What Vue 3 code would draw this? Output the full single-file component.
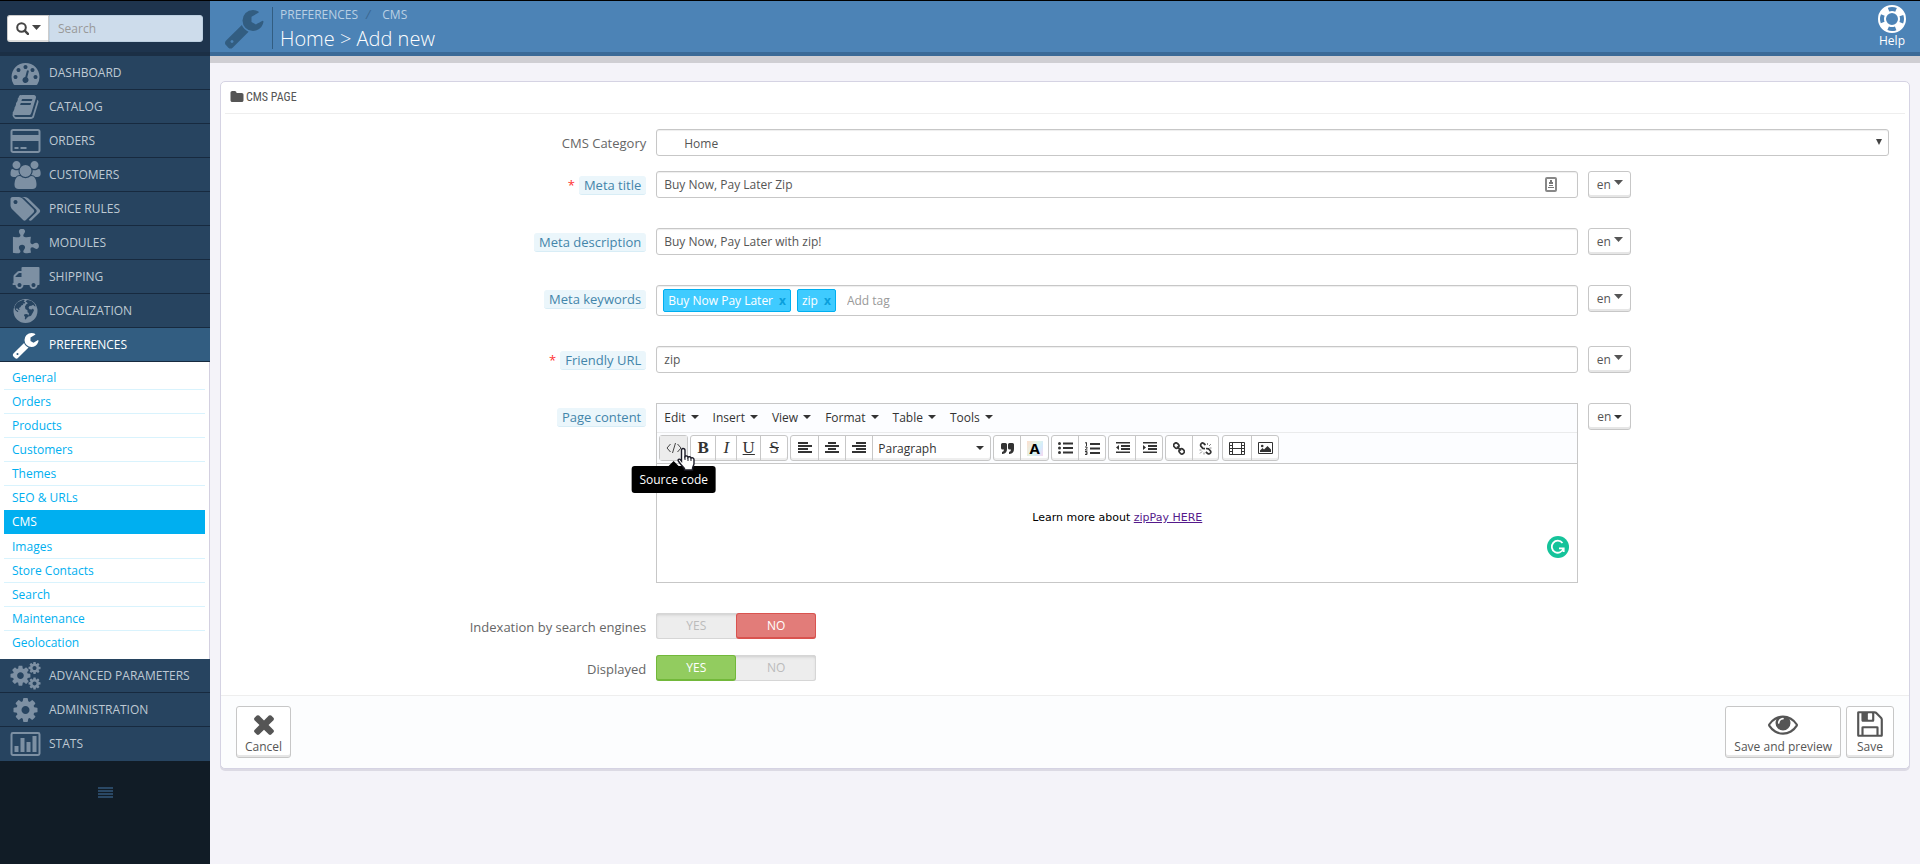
<script setup>
import { ref } from 'vue'

const cog = 'M1152 896q0-106-75-181t-181-75-181 75-75 181 75 181 181 75 181-75 75-181zm512-109v222q0 12-8 23t-20 13l-185 28q-19 54-39 91 35 50 107 138 10 12 10 25t-9 23q-27 37-99 108t-94 71q-12 0-26-9l-138-108q-44 23-91 38-16 136-29 186-7 28-36 28h-222q-14 0-24.5-8.5t-11.5-21.5l-28-184q-49-16-90-37l-141 107q-10 9-25 9-14 0-25-11-126-114-165-168-7-10-7-23 0-12 8-23 15-21 51-66.5t54-70.5q-27-50-41-99l-183-27q-13-2-21-12.5t-8-23.5v-222q0-12 8-23t19-13l186-28q14-46 39-92-40-57-107-138-10-12-10-24 0-10 9-23 26-36 98.5-107.5t94.5-71.5q13 0 26 10l138 107q44-23 91-38 16-136 29-186 7-28 36-28h222q14 0 24.5 8.5t11.5 21.5l28 184q49 16 90 37l142-107q9-9 24-9 13 0 25 10 129 119 165 170 7 8 7 22 0 12-8 23-15 21-51 66.5t-54 70.5q26 50 41 98l183 28q13 2 21 12.5t8 23.5z'
const wrench = 'M448 1472q0-26-19-45t-45-19-45 19-19 45 19 45 45 19 45-19 19-45zm644-420l-682 682q-37 37-90 37-52 0-91-37l-106-108q-38-36-38-90 0-53 38-91l681-681q39 98 114.5 173.5t173.5 114.5zm634-435q0 39-23 106-47 134-164.5 217.5t-258.5 83.5q-185 0-316.5-131.5t-131.5-316.5 131.5-316.5 316.5-131.5q58 0 121.5 16.5t107.5 46.5q16 11 16 28t-16 28l-293 169v224l193 107q5-3 79-48.5t135.5-81 70.5-35.5q15 0 23.5 10t8.5 25z'
const times = 'M1490 1322q0 40-28 68l-136 136q-28 28-68 28t-68-28l-294-294-294 294q-28 28-68 28t-68-28l-136-136q-28-28-28-68t28-68l294-294-294-294q-28-28-28-68t28-68l136-136q28-28 68-28t68 28l294 294 294-294q28-28 68-28t68 28l136 136q28 28 28 68t-28 68l-294 294 294 294q28 28 28 68z'
const eye = 'M1664 960q-152-236-381-353 61 104 61 225 0 185-131.5 316.5t-316.5 131.5-316.5-131.5-131.5-316.5q0-121 61-225-229 117-381 353 133 205 333.5 326.5t434.5 121.5 434.5-121.5 333.5-326.5zm-720-384q0-20-14-34t-34-14q-125 0-214.5 89.5t-89.5 214.5q0 20 14 34t34 14 34-14 14-34q0-86 61-147t147-61q20 0 34-14t14-34zm848 384q0 34-20 69-140 230-376.5 368.5t-499.5 138.5-499.5-139-376.5-368q-20-35-20-69t20-69q140-229 376.5-368t499.5-139 499.5 139 376.5 368q20 35 20 69z'
const floppy = 'M512 1536h768v-384h-768v384zm896 0h128v-896q0-14-10-38.5t-20-34.5l-281-281q-10-10-34-20t-39-10v416q0 40-28 68t-68 28h-576q-40 0-68-28t-28-68v-416h-128v1280h128v-416q0-40 28-68t68-28h832q40 0 68 28t28 68v416zm-384-928v-320q0-13-9.5-22.5t-22.5-9.5h-192q-13 0-22.5 9.5t-9.5 22.5v320q0 13 9.5 22.5t22.5 9.5h192q13 0 22.5-9.5t9.5-22.5zm640 32v928q0 40-28 68t-68 28h-1344q-40 0-68-28t-28-68v-1344q0-40 28-68t68-28h928q40 0 88 20t76 48l280 280q28 28 48 76t20 88z'
const folder = 'M1728 608v704q0 92-66 158t-158 66h-1216q-92 0-158-66t-66-158v-960q0-92 66-158t158-66h320q92 0 158 66t66 158v32h672q92 0 158 66t66 158z'

const topItems = [
  { label: 'Dashboard', w: 1792, d: 'M384 1152q0-53-37.5-90.5t-90.5-37.5-90.5 37.5-37.5 90.5 37.5 90.5 90.5 37.5 90.5-37.5 37.5-90.5zm192-448q0-53-37.5-90.5t-90.5-37.5-90.5 37.5-37.5 90.5 37.5 90.5 90.5 37.5 90.5-37.5 37.5-90.5zm428 481l101-382q6-26-7.5-48.5t-38.5-29.5-48 6.5-30 39.5l-101 382q-60 5-107 43.5t-63 98.5q-20 77 20 146t117 89 146-20 89-117q16-60-6-117t-72-91zm660-33q0-53-37.5-90.5t-90.5-37.5-90.5 37.5-37.5 90.5 37.5 90.5 90.5 37.5 90.5-37.5 37.5-90.5zm-640-640q0-53-37.5-90.5t-90.5-37.5-90.5 37.5-37.5 90.5 37.5 90.5 90.5 37.5 90.5-37.5 37.5-90.5zm448 192q0-53-37.5-90.5t-90.5-37.5-90.5 37.5-37.5 90.5 37.5 90.5 90.5 37.5 90.5-37.5 37.5-90.5zm320 448q0 261-141 483-19 29-54 29h-1402q-35 0-54-29-141-221-141-483 0-182 71-348t191-286 286-191 348-71 348 71 286 191 191 286 71 348z' },
  { label: 'Catalog', w: 1792, d: 'M1703 478q40 57 18 129l-275 906q-19 64-76.5 107.5t-122.5 43.5h-923q-77 0-148.5-53.5t-99.5-131.5q-24-67-2-127 0-4 3-27t4-37q1-8-3-21.5t-3-19.5q2-11 8-21t16.5-23.5 16.5-23.5q23-38 45-91.5t30-91.5q3-10 .5-30t-.5-28q3-11 17-28t17-23q21-36 42-92t25-90q1-9-2.5-32t.5-28q4-13 22-30.5t22-22.5q19-26 42.5-84.5t27.5-96.5q1-8-3-25.5t-2-26.5q2-8 9-18t18-23 17-21q8-12 16.5-30.5t15-35 16-36 19.5-32 26.5-23.5 36-11.5 47.5 5.5l-1 3q38-9 51-9h761q74 0 114 56t18 130l-274 906q-36 119-71.5 153.5t-128.5 34.5h-869q-27 0-38 15-11 16-1 43 24 70 144 70h923q29 0 56-15.5t35-41.5l300-987q7-22 5-57 38 15 59 43zm-1064 2q-4 13 2 22.5t20 9.5h608q13 0 25.5-9.5t16.5-22.5l21-64q4-13-2-22.5t-20-9.5h-608q-13 0-25.5 9.5t-16.5 22.5zm-83 256q-4 13 2 22.5t20 9.5h608q13 0 25.5-9.5t16.5-22.5l21-64q4-13-2-22.5t-20-9.5h-608q-13 0-25.5 9.5t-16.5 22.5z' },
  { label: 'Orders', w: 1920, d: 'M1760 128q66 0 113 47t47 113v1216q0 66-47 113t-113 47h-1600q-66 0-113-47t-47-113v-1216q0-66 47-113t113-47h1600zm-1600 128q-13 0-22.5 9.5t-9.5 22.5v224h1664v-224q0-13-9.5-22.5t-22.5-9.5h-1600zm1600 1280q13 0 22.5-9.5t9.5-22.5v-608h-1664v608q0 13 9.5 22.5t22.5 9.5h1600zm-1504-128v-128h256v128h-256zm384 0v-128h384v128h-384z' },
  { label: 'Customers', w: 1920, d: 'M593 896q-162 5-265 128h-134q-82 0-138-40.5t-56-118.5q0-353 124-353 6 0 43.5 21t97.5 42.5 119 21.5q67 0 133-23-5 37-5 66 0 159 93 256zm1071 637q0 120-73 189.5t-194 69.5h-874q-121 0-194-69.5t-73-189.5q0-53 3.5-103.5t14-109 26.5-108.5 43-97.5 62-81 85.5-53.5 111.5-20q10 0 43 21.5t73 48 107 48 135 21.5 135-21.5 107-48 73-48 43-21.5q61 0 111.5 20t85.5 53.5 62 81 43 97.5 26.5 108.5 14 109 3.5 103.5zm-1024-1277q0 106-75 181t-181 75-181-75-75-181 75-181 181-75 181 75 75 181zm704 384q0 159-112.5 271.5t-271.5 112.5-271.5-112.5-112.5-271.5 112.5-271.5 271.5-112.5 271.5 112.5 112.5 271.5zm576 225q0 78-56 118.5t-138 40.5h-134q-103-123-265-128 93-97 93-256 0-29-5-66 66 23 133 23 59 0 119-21.5t97.5-42.5 43.5-21q124 0 124 353zm-128-609q0 106-75 181t-181 75-181-75-75-181 75-181 181-75 181 75 75 181z' },
  { label: 'Price Rules', w: 1920, d: 'M448 448q0-53-37.5-90.5t-90.5-37.5-90.5 37.5-37.5 90.5 37.5 90.5 90.5 37.5 90.5-37.5 37.5-90.5zm1067 576q0 53-37 90l-491 492q-39 37-91 37-53 0-90-37l-715-716q-38-37-64.5-101t-26.5-117v-416q0-52 38-90t90-38h416q53 0 117 26.5t102 64.5l715 714q37 39 37 91zm384 0q0 53-37 90l-491 492q-39 37-91 37-36 0-59-14t-53-45l470-470q37-37 37-90 0-52-37-91l-715-714q-38-38-102-64.5t-117-26.5h224q53 0 117 26.5t102 64.5l715 714q37 39 37 91z' },
  { label: 'Modules', w: 1792, d: 'M1755 1083q0 81-44.5 135t-123.5 54q-41 0-77.5-17.5t-59-38-56.5-38-71-17.5q-110 0-110 124 0 39 16 115t15 115v5q-22 0-33 1-34 3-97.5 11.5t-115.5 13.5-98 5q-61 0-103-26.5t-42-83.5q0-37 17.5-71t38-56.5 38-59 17.5-77.5q0-79-54-123.5t-135-44.5q-84 0-143 45.5t-59 127.5q0 43 15 83t33.5 64.5 33.5 53 15 50.5q0 45-46 89-37 35-117 35-95 0-245-24-9-2-27.5-4t-27.5-4l-13-2q-1 0-3-1-2 0-2-1v-1024q2 1 17.5 3.5t34 5 21.5 3.5q150 24 245 24 80 0 117-35 46-44 46-89 0-22-15-50.5t-33.5-53-33.5-64.5-15-83q0-82 59-127.5t144-45.5q80 0 134 44.5t54 123.5q0 41-17.5 77.5t-38 59-38 56.5-17.5 71q0 57 42 83.5t103 26.5q64 0 180-15t163-17v2q-1 2-3.5 17.5t-5 34-3.5 21.5q-24 150-24 245 0 80 35 117 44 46 89 46 22 0 50.5-15t53-33.5 64.5-33.5 83-15q82 0 127.5 59t45.5 143z' },
  { label: 'Shipping', w: 1792, d: 'M640 1408q0-52-38-90t-90-38-90 38-38 90 38 90 90 38 90-38 38-90zm-384-512h384v-256h-158q-13 0-22 9l-195 195q-9 9-9 22v30zm1280 512q0-52-38-90t-90-38-90 38-38 90 38 90 90 38 90-38 38-90zm256-1088v1024q0 15-4 26.5t-13.5 18.5-16.5 11.5-23.5 6-22.5 2-25.5 0-22.5-.5q0 106-75 181t-181 75-181-75-75-181h-384q0 106-75 181t-181 75-181-75-75-181h-64q-3 0-22.5.5t-25.5 0-22.5-2-23.5-6-16.5-11.5-13.5-18.5-4-26.5q0-26 19-45t45-19v-320q0-8-.5-35t0-38 2.5-34.5 6.5-37 14-30.5 22.5-30l198-198q19-19 50.5-32t58.5-13h160v-192q0-26 19-45t45-19h1024q26 0 45 19t19 45z' },
  { label: 'Localization', w: 1792, globe: true },
  { label: 'Preferences', w: 1792, d: wrench, active: true }
]
const subItems = ['General', 'Orders', 'Products', 'Customers', 'Themes', 'SEO & URLs', 'CMS', 'Images', 'Store Contacts', 'Search', 'Maintenance', 'Geolocation']
const bottomItems = [
  { label: 'Advanced Parameters', w: 1920, cogs: true },
  { label: 'Administration', w: 1792, d: cog },
  { label: 'Stats', w: 1920, chart: true }
]
const editorMenus = ['Edit', 'Insert', 'View', 'Format', 'Table', 'Tools']

const category = ref('Home')
const metaTitle = ref('Buy Now, Pay Later Zip')
const metaDescription = ref('Buy Now, Pay Later with zip!')
const tags = ref(['Buy Now Pay Later', 'zip'])
const friendlyUrl = ref('zip')
const indexed = ref('no')
const displayed = ref('yes')
</script>

<template>
  <div class="app">
    <aside class="sidebar">
      <form class="search" role="search" @submit.prevent>
        <button type="button" class="search-type" aria-label="Search scope">
          <svg width="13" height="13" viewBox="0 0 13 13"><circle cx="5.5" cy="5.5" r="4.3" fill="none" stroke="#444" stroke-width="2" /><path d="M8.7 8.7l3.2 3.2" stroke="#444" stroke-width="2.4" stroke-linecap="round" /></svg>
          <svg width="9" height="6" viewBox="0 0 9 6"><path d="M0 0h9L4.500 5z" fill="#444" /></svg>
        </button>
        <input type="search" placeholder="Search" aria-label="Search" />
      </form>
      <nav>
        <a v-for="item in topItems" :key="item.label" href="#" class="nav-item" :class="{ active: item.active }">
          <svg class="nav-icon" :viewBox="`0 0 ${item.w} 1792`" fill="currentColor">
            <template v-if="item.globe">
              <circle cx="896" cy="896" r="768" />
              <path fill="#274460" d="M610 215l190-50 60 70-90 60 120 20-20 100-100-30 30 90-130 40-70 130-110 30 60 110-50 60-100-100-110-30 10 120 110 30 60 140 160 30 150 120-30 130-120 90-50 160-60 40-90-190-10-170-120-130-50-190" opacity="0" />
              <path fill="#274460" d="M560 260l200-90 90 60-80 70 110 40-60 90-100-20 30 80-120 50-60 120-100 40 50 100-40 40-110-110-90 0 20 90 90 40 50 80-60 20-130-110-60-160 60-180 120-160zM1040 190l240 70 180 160 90 180-100-20-60-80-110 60-130 10-60 110 60 100 150 20 70-60 70 100-60 140-120 210-100 60-60-90 10-130-80-60-10-130-130-70-30-160 90-140 90-60-50-70-90-40 60-80zM830 1110l150-20 130 70-20 110-110 60-60 110-70-40 20-120-70-90z" />
            </template>
            <path v-else :d="item.d" />
          </svg>
          <span>{{ item.label }}</span>
        </a>
        <div class="subnav">
          <a v-for="sub in subItems" :key="sub" href="#" :class="{ current: sub === 'CMS' }">{{ sub }}</a>
        </div>
        <a v-for="item in bottomItems" :key="item.label" href="#" class="nav-item">
          <svg class="nav-icon" :viewBox="`0 0 ${item.w} 1792`" fill="currentColor">
            <template v-if="item.cogs">
              <path :d="cog" transform="translate(-106 131) scale(.83)" />
              <path :d="cog" transform="translate(1090 -65) scale(.5)" />
              <path :d="cog" transform="translate(1090 925) scale(.5)" />
            </template>
            <template v-else-if="item.chart">
              <rect x="64" y="192" width="1792" height="1408" rx="90" fill="none" stroke="currentColor" stroke-width="128" />
              <path d="M256 1024h256v384H256zM640 512h256v896H640zM1024 768h256v640h-256zM1408 384h256v1024h-256z" />
            </template>
            <path v-else :d="item.d" />
          </svg>
          <span>{{ item.label }}</span>
        </a>
      </nav>
      <button type="button" class="collapse" aria-label="Collapse menu">
        <svg width="15" height="11" viewBox="0 0 15 11"><path d="M0 0h15v2H0zM0 3h15v2H0zM0 6h15v2H0zM0 9h15v2H0z" fill="#2a4865" /></svg>
      </button>
    </aside>

    <div class="main">
      <header class="page-head">
        <svg class="page-icon" viewBox="0 0 1792 1792"><path :d="wrench" fill="#325d81" /></svg>
        <div class="titles">
          <nav class="crumbs" aria-label="Breadcrumb"><a href="#">PREFERENCES</a><i>/</i><a href="#">CMS</a></nav>
          <h1>Home &gt; Add new</h1>
        </div>
        <a href="#" class="help">
          <svg width="30" height="30" viewBox="0 0 30 30" fill="none">
            <circle cx="15" cy="15" r="10" stroke="#fff" stroke-width="8" />
            <circle cx="15" cy="15" r="10" stroke="#4c83b6" stroke-width="4" stroke-dasharray="7.708 8" stroke-dashoffset="3.854" />
          </svg>
          <span>Help</span>
        </a>
      </header>

      <form class="panel" @submit.prevent>
        <h2 class="panel-title"><svg width="14" height="14" viewBox="0 0 1792 1792"><path :d="folder" fill="#555" /></svg>CMS PAGE</h2>

        <div class="rows">
          <div class="row">
            <div class="label-cell"><label for="category">CMS Category</label></div>
            <div class="select-wrap">
              <select id="category" v-model="category" class="field"><option>Home</option></select>
              <svg width="6" height="6" viewBox="0 0 6 6"><path d="M0 0h6L3 6z" fill="#444" /></svg>
            </div>
          </div>

          <div class="row tall">
            <div class="label-cell"><b>*</b><label for="title" class="hint">Meta title</label></div>
            <div class="lang-row">
              <div class="input-wrap">
                <input id="title" v-model="metaTitle" type="text" class="field" />
                <svg class="autofill" width="12" height="15" viewBox="0 0 12 15"><rect x="1" y="1" width="10" height="13" rx="1" fill="#fff" stroke="#888" stroke-width="2" /><path d="M5 3h2v2h1v2H4V5h1zM4 8h4v1H4zM3 10h6v1H3z" fill="#777" /></svg>
              </div>
              <button type="button" class="btn lang">en<svg width="9" height="9" viewBox="0 0 9 9"><path d="M0 0h9L4.500 5z" fill="#555" /></svg></button>
            </div>
          </div>

          <div class="row tall">
            <div class="label-cell"><label for="description" class="hint">Meta description</label></div>
            <div class="lang-row">
              <input id="description" v-model="metaDescription" type="text" class="field" />
              <button type="button" class="btn lang">en<svg width="9" height="9" viewBox="0 0 9 9"><path d="M0 0h9L4.500 5z" fill="#555" /></svg></button>
            </div>
          </div>

          <div class="row tall">
            <div class="label-cell"><label for="keywords" class="hint">Meta keywords</label></div>
            <div class="lang-row">
              <div class="field tag-field">
                <span v-for="tag in tags" :key="tag" class="tag">{{ tag }}<button type="button" :aria-label="`Remove ${tag}`">x</button></span>
                <input id="keywords" type="text" placeholder="Add tag" />
              </div>
              <button type="button" class="btn lang">en<svg width="9" height="9" viewBox="0 0 9 9"><path d="M0 0h9L4.500 5z" fill="#555" /></svg></button>
            </div>
          </div>

          <div class="row tall">
            <div class="label-cell"><b>*</b><label for="url" class="hint">Friendly URL</label></div>
            <div class="lang-row">
              <input id="url" v-model="friendlyUrl" type="text" class="field" />
              <button type="button" class="btn lang">en<svg width="9" height="9" viewBox="0 0 9 9"><path d="M0 0h9L4.500 5z" fill="#555" /></svg></button>
            </div>
          </div>

          <div class="row tall">
            <div class="label-cell"><span id="content-label" class="hint">Page content</span></div>
            <div class="lang-row">
              <div class="editor">
                <div class="menubar">
                  <button v-for="menu in editorMenus" :key="menu" type="button">{{ menu }}<svg width="8" height="4" viewBox="0 0 8 4"><path d="M0 0h8L4 4z" fill="#333" /></svg></button>
                </div>
                <div class="toolbar">
                  <div class="group code-group">
                    <button type="button" class="w27 pressed" aria-label="Source code"><svg width="16" height="12" viewBox="0 0 16 12" fill="none" stroke="#444"><path d="M4.500 2L1 6l3.500 4M11.500 2L15 6l-3.500 4M9.500 1l-3 10" /></svg></button>
                    <div class="tooltip" role="tooltip">Source code</div>
                    <svg class="pointer" width="19" height="24" viewBox="0 0 19 24"><path d="M6 1.500c1.500 0 2 1 2 2v6c.5-.9 3-.8 3 .7.7-.9 2.900-.5 3 .9 1-.8 3-.2 3 1.500v4c0 2-1.500 3-1.500 5v1.400H7.500v-1.400C5 19 3 16.500 1.300 14c-.9-1.700 1-2.500 2.200-1.300L4.500 14V3.500c0-1 .3-2 1.500-2z" fill="#fff" stroke="#1c1c28" stroke-width="1.400" /><path d="M8 9v4M11 10.500V14M14 11.500V14" stroke="#1c1c28" /></svg>
                  </div>
                  <div class="group serif">
                    <button type="button" class="w24" aria-label="Bold"><strong>B</strong></button>
                    <button type="button" class="w21" aria-label="Italic"><em>I</em></button>
                    <button type="button" class="w24" aria-label="Underline"><u>U</u></button>
                    <button type="button" class="w27" aria-label="Strikethrough"><s>S</s></button>
                  </div>
                  <div class="group">
                    <button type="button" class="w27" aria-label="Align left"><svg width="14" height="12" viewBox="0 0 14 12"><path d="M0 0h10v2H0zM0 3h14v2H0zM0 6h10v2H0zM0 9h14v2H0z" /></svg></button>
                    <button type="button" class="w27" aria-label="Align center"><svg width="14" height="12" viewBox="0 0 14 12"><path d="M3 0h8v2H3zM0 3h14v2H0zM3 6h8v2H3zM0 9h14v2H0z" /></svg></button>
                    <button type="button" class="w27" aria-label="Align right"><svg width="14" height="12" viewBox="0 0 14 12"><path d="M4 0h10v2H4zM0 3h14v2H0zM4 6h10v2H4zM0 9h14v2H0z" /></svg></button>
                    <button type="button" class="format">Paragraph<svg width="8" height="4" viewBox="0 0 8 4"><path d="M0 0h8L4 4z" /></svg></button>
                  </div>
                  <div class="group">
                    <button type="button" class="w26" aria-label="Blockquote"><svg width="13" height="11" viewBox="0 0 13 11"><path d="M0 1.500Q0 0 1.500 0h3Q6 0 6 1.500V6q0 4.500-4.500 5H1V9q2-.5 2-2.500H1.500Q0 6.500 0 5zM7 1.500Q7 0 8.500 0h3Q13 0 13 1.500V6q0 4.500-4.500 5H8V9q2-.5 2-2.500H8.500Q7 6.500 7 5z" /></svg></button>
                    <button type="button" class="w28 colour" aria-label="Text color"><span>A</span></button>
                  </div>
                  <div class="group">
                    <button type="button" class="w26" aria-label="Bullet list"><svg width="15" height="12" viewBox="0 0 15 12"><circle cx="1.500" cy="1.500" r="1.500" /><circle cx="1.500" cy="6" r="1.500" /><circle cx="1.500" cy="10.500" r="1.500" /><path d="M5 .5h10v2H5zM5 5h10v2H5zM5 9.500h10v2H5z" /></svg></button>
                    <button type="button" class="w27" aria-label="Numbered list"><svg width="15" height="13" viewBox="0 0 15 13"><path d="M5 1h10v2H5zM5 5.500h10v2H5zM5 10h10v2H5z" /><path d="M0 1l1.500-.5V4M0 5h2v1.200L.2 8H2.500M0 9.500h2v3H0M.5 11h1.500" fill="none" stroke="#333" /></svg></button>
                  </div>
                  <div class="group">
                    <button type="button" class="w26" aria-label="Decrease indent"><svg width="15" height="12" viewBox="0 0 15 12"><path d="M1 0h14v1.500H1zM6 3h9v2H6zM6 6h9v2H6zM1 9.500h14v1.500H1zM4 3v5L1 5.500z" /></svg></button>
                    <button type="button" class="w27" aria-label="Increase indent"><svg width="15" height="12" viewBox="0 0 15 12"><path d="M1 0h14v1.500H1zM6 3h9v2H6zM6 6h9v2H6zM1 9.500h14v1.500H1zM1 3v5l3-2.500z" /></svg></button>
                  </div>
                  <div class="group">
                    <button type="button" class="w26" aria-label="Insert link"><svg width="12" height="13" viewBox="0 0 12 13" fill="none" stroke="#333" stroke-width="1.700"><rect x="-2.300" y="-2.700" width="4.600" height="5.400" rx="2.200" transform="translate(3.300 3.600) rotate(-42)" /><rect x="-2.300" y="-2.700" width="4.600" height="5.400" rx="2.200" transform="translate(8.700 9.300) rotate(-42)" /><path d="M4 4.500l4 4" /></svg></button>
                    <button type="button" class="w26" aria-label="Remove link"><svg width="13" height="13" viewBox="0 0 13 13" fill="none" stroke="#333" stroke-width="1.700"><path d="M6.500 3L4.500 1.300C3 .3 1 2 1.800 4l2 2.400 2.200.2M7 6.500l2.500.3 2 2.200c1 1.700-.8 3.500-2.500 2.700L6.800 10" /><path d="M8.500 1v2M12 2L10 4M12.500 6H10.500M1 11.500L3 9.500M5 12.500V10.500M.5 8H2.500" stroke="#888" stroke-width="1" /></svg></button>
                  </div>
                  <div class="group last">
                    <button type="button" class="w28" aria-label="Insert video"><svg width="16" height="13" viewBox="0 0 16 13" fill="none" stroke="#333"><path d="M.5.5h15v12H.5zM3.500.5v12M12.500.5v12M3.500 6.500h9M1 3.500h2.500M1 6.500h2.500M1 9.500h2.500M12.500 3.500H15M12.500 6.500H15M12.500 9.500H15" /></svg></button>
                    <button type="button" class="w27" aria-label="Insert image"><svg width="15" height="12" viewBox="0 0 15 12"><path d="M.5.5h14v11H.5z" fill="none" stroke="#333" /><circle cx="4.200" cy="4" r="1.300" /><path d="M2 10V8.500L4.500 6l1.500 1.500L9.500 4 13 7.500V10z" /></svg></button>
                  </div>
                </div>
                <div class="canvas" contenteditable="true" role="textbox" aria-multiline="true" aria-labelledby="content-label"><p>Learn more about <a href="#">zipPay HERE</a></p></div>
                <svg class="checker" width="22" height="22" viewBox="0 0 22 22" fill="none"><circle cx="11" cy="11" r="11" fill="#15c39a" /><path d="M15.500 7A6 6 0 1 0 16.500 12.500M12 12.300h4.700V16" stroke="#fff" stroke-width="1.800" /></svg>
              </div>
              <button type="button" class="btn lang">en<svg width="8" height="4" viewBox="0 0 8 4"><path d="M0 0h8L4 4z" fill="#333" /></svg></button>
            </div>
          </div>

          <div class="row switch-row">
            <div class="label-cell"><span id="index-label">Indexation by search engines</span></div>
            <div class="switch" role="radiogroup" aria-labelledby="index-label">
              <label class="yes"><input v-model="indexed" type="radio" name="indexed" value="yes" />YES</label>
              <label class="no"><input v-model="indexed" type="radio" name="indexed" value="no" />NO</label>
            </div>
          </div>
          <div class="row switch-row">
            <div class="label-cell"><span id="display-label">Displayed</span></div>
            <div class="switch" role="radiogroup" aria-labelledby="display-label">
              <label class="yes"><input v-model="displayed" type="radio" name="displayed" value="yes" />YES</label>
              <label class="no"><input v-model="displayed" type="radio" name="displayed" value="no" />NO</label>
            </div>
          </div>
        </div>

        <footer class="panel-foot">
          <button type="button" class="btn action"><svg width="30" height="30" viewBox="0 0 1792 1792"><path :d="times" /></svg>Cancel</button>
          <button type="button" class="btn action push"><svg width="30" height="30" viewBox="0 0 1792 1792"><path :d="eye" /></svg>Save and preview</button>
          <button type="submit" class="btn action"><svg width="30" height="30" viewBox="0 0 1792 1792"><path :d="floppy" /></svg>Save</button>
        </footer>
      </form>
    </div>
  </div>
</template>

<style>
body { background: #f4f3f9; }
</style>

<style scoped>
.app, .app * { box-sizing: border-box; }
.app {
  display: grid;
  grid-template-columns: 210px minmax(0, 1fr);
  min-height: 100vh;
  border-top: 1px solid #000;
  font: 12px/17px "Open Sans", "Noto Sans", sans-serif;
  color: #555;
}
button, input, select { font: inherit; color: inherit; margin: 0; }
button { cursor: pointer; }
a { text-decoration: none; }
svg { flex: none; display: block; }

.sidebar { background: #111c26; }
.search {
  display: flex;
  height: 55px;
  padding: 14px 7px 10px;
  background: #1e344d;
  border-bottom: 4px solid #1b2f45;
}
.search-type {
  display: flex;
  align-items: center;
  gap: 3px;
  width: 42px;
  padding: 0 0 0 8px;
  border: 1px solid #ccc;
  border-bottom: 2px solid #ddd;
  border-radius: 3px 0 0 3px;
  background: #fff;
}
.search input {
  flex: 1;
  min-width: 0;
  border: 1px solid #bccfe0;
  border-radius: 0 3px 3px 0;
  background: #cddceb;
  padding: 0 8px;
  appearance: none;
  outline: none;
}
.search input::placeholder { color: #999; opacity: 1; }
.nav-item {
  display: flex;
  align-items: center;
  gap: 8px;
  height: 34px;
  padding-left: 10px;
  background: #274460;
  border-bottom: 1px solid #172a3f;
  color: #bec9d3;
  text-transform: uppercase;
}
.nav-item:last-child { border-bottom-color: #274460; }
.nav-icon { width: 31px; height: 28px; color: #7d90a3; }
.nav-item.active { background: #325d81; color: #fff; }
.nav-item.active .nav-icon { color: #fff; }
.subnav {
  padding: 4px;
  background: #fff;
  border-right: 1px solid #d3d0e0;
}
.subnav a {
  display: block;
  height: 24px;
  padding: 3px 8px;
  line-height: 18px;
  border-bottom: 1px solid #d9f3fd;
  color: #00aff0;
}
.subnav a:last-child, .subnav a:nth-child(6) { border-bottom-color: #fff; }
.subnav a.current { background: #00aff0; border-color: #00aff0; color: #fff; margin-bottom: 1px; }
.collapse { display: block; margin: 26px auto 0; padding: 0; border: 0; background: none; }

.page-head {
  display: flex;
  height: 62px;
  padding: 6px 13px 0;
  background: linear-gradient(#4c83b6 51px, #3b6a97 51px, #3b6a97 55px, #cfced3 55px);
}
.page-icon { width: 42px; height: 42px; }
.titles { height: 42px; margin-left: 7px; padding-left: 7px; border-left: 1px solid #325d81; }
.crumbs { display: flex; gap: 8px; line-height: 16px; }
.crumbs a { color: #bad0e4; }
.crumbs a:last-child { margin-left: 4px; }
.crumbs i { color: #3a6690; }
h1 { margin: 3px 0 0; font-size: 20px; line-height: 26px; font-weight: 300; color: #fff; }
.help {
  display: flex;
  flex-direction: column;
  align-items: center;
  margin: -3px 0 0 auto;
  color: #fff;
  font-weight: 500;
  line-height: 14px;
}

.panel {
  margin: 18px 10px 0;
  background: #fff;
  border: 1px solid #d5d3e3;
  border-radius: 5px;
  box-shadow: 0 2px 0 #dcdae4;
}
.panel-title {
  display: flex;
  align-items: center;
  gap: 2px;
  height: 32px;
  margin: 0 4px;
  padding: 0 0 2px 5px;
  border-bottom: 1px solid #eee;
  font: 12px/18px "Ubuntu Condensed", "Roboto Condensed", "Open Sans Condensed", Roboto, sans-serif;
}
.rows { display: flex; flex-direction: column; gap: 15px; padding: 15px 15px 13px 16px; }
.row { display: grid; grid-template-columns: minmax(0, 1fr) minmax(0, 3fr); }
.row > :last-child { margin: 0 5px; }
.row.tall { margin-bottom: 15px; }
.row.switch-row { min-height: 27px; }
.label-cell {
  display: flex;
  justify-content: flex-end;
  align-items: flex-start;
  gap: 4px;
  padding: 5px 5px 0 0;
  font-size: 13px;
  line-height: 18px;
  color: #666;
}
.label-cell b { color: #f33; font-weight: 400; font-size: 13px; }
.hint {
  padding: 0 5px;
  border-bottom: 1px solid #d8edf6;
  border-radius: 3px;
  background: #ebf6fb;
  color: #4385aa;
}
.lang-row { display: grid; grid-template-columns: minmax(0, 3fr) minmax(0, 1fr); align-items: start; }
.row > .lang-row { margin: 0; }
.lang-row > * { margin: 0 5px; }
.field {
  width: 100%;
  height: 27px;
  padding: 0 7px;
  border: 1px solid #c7c7c7;
  border-radius: 3px;
  background: #fff;
  box-shadow: inset 0 1px 1px #eee;
  outline: none;
}
.lang-row > .field { width: auto; }
.select-wrap, .input-wrap { position: relative; }
select.field { display: block; appearance: none; padding: 1px 0 0 27px; }
.select-wrap svg { position: absolute; right: 7px; top: 10px; }
.input-wrap .field { display: block; }
.autofill { position: absolute; right: 21px; top: 6px; }
.tag-field { display: flex; gap: 6px; height: 31px; padding: 3px 6px; }
.tag {
  display: flex;
  align-items: center;
  height: 23px;
  padding: 0 4px;
  border: 1px solid #00aff0;
  border-radius: 2px;
  background: #3fcbff;
  color: #fff;
}
.tag button { margin-left: 6px; padding: 0; border: 0; background: none; color: #0a9fdc; font-weight: 700; }
.tag-field input { flex: 1; border: 0; padding: 0 5px; outline: none; background: none; }
.tag-field input::placeholder { color: #999; opacity: 1; }
.btn {
  border: 1px solid #c7c7c7;
  border-radius: 3px;
  background: #fff;
  box-shadow: inset 0 -2px 0 #e6e6e6;
}
.lang {
  display: flex;
  align-items: center;
  justify-content: center;
  gap: 3px;
  width: 43px;
  height: 27px;
  padding: 0;
}

.editor { position: relative; border: 1px solid #c7c7c7; }
.menubar {
  display: flex;
  gap: 14px;
  height: 29px;
  padding: 0 7px 2px;
  background: #fcfdff;
  border-bottom: 1px solid #eaebec;
}
.menubar button {
  display: flex;
  align-items: center;
  gap: 5px;
  padding: 0;
  border: 0;
  background: none;
  color: #333;
}
.toolbar {
  display: flex;
  flex-wrap: wrap;
  gap: 2px;
  padding: 2px;
  background: #fcfdff;
  border-bottom: 1px solid #c7c7c7;
}
.group {
  display: flex;
  height: 26px;
  border: 1px solid #c7c7c7;
  border-radius: 3px;
  background: #fff;
  box-shadow: inset 0 -2px 0 #eee;
}
.group button {
  display: flex;
  align-items: center;
  justify-content: center;
  padding: 0;
  border: 0;
  background: none;
  color: #333;
}
.group button + button { border-left: 1px solid #c7c7c7; }
.group svg { fill: #333; }
.group svg[fill="none"] { fill: none; }
.w21 { width: 21px; }
.w24 { width: 24px; }
.w26 { width: 26px; }
.w27 { width: 27px; }
.w28 { width: 28px; }
.group.last { margin-left: 1px; }
.group .pressed { background: #ececec; }
.group .format { justify-content: space-between; width: 118px; padding: 0 6px 0 5px; }
.serif { font: 17px/20px "Liberation Serif", serif; }
.colour span {
  padding: 0 3px;
  background: linear-gradient(120deg, #fde0d0, #e0f5e8 50%, #d4ecfc 70%, #f6d8f0);
  color: #000;
  font: bold 15px/15px "Open Sans", sans-serif;
}
.code-group { position: relative; }
.tooltip {
  position: absolute;
  z-index: 2;
  top: 30px;
  left: 50%;
  transform: translateX(-50%);
  padding: 5px 8px;
  border-radius: 3px;
  background: #000;
  color: #fff;
  white-space: nowrap;
}
.tooltip::before {
  content: "";
  position: absolute;
  top: -5px;
  left: 50%;
  margin-left: -5px;
  border: 5px solid transparent;
  border-top: 0;
  border-bottom-color: #000;
}
.pointer { position: absolute; z-index: 3; left: 17px; top: 11px; }
.canvas { height: 118px; padding: 45px 8px 0; color: #000; outline: none; font: 11px/17px "DejaVu Sans", sans-serif; }
.canvas p { margin: 0; text-align: center; }
.canvas a { color: #551a8b; text-decoration: underline; }
.checker { position: absolute; right: 8px; bottom: 24px; }

.switch {
  display: flex;
  width: 160px;
  height: 26px;
  border-radius: 3px;
  background: #ededed;
  box-shadow: inset 0 0 0 1px #d6d6d6, inset 0 2px 3px #ccc;
  color: #bbb;
}
.switch label {
  flex: 1;
  border: 1px solid transparent;
  border-radius: 3px;
  text-align: center;
  line-height: 23px;
}
.switch input { position: absolute; opacity: 0; width: 1px; height: 1px; margin: 0; }
.switch label:has(:checked) { color: #fff; border-bottom-width: 2px; }
.switch .yes:has(:checked) { background: #92cc5f; border-color: #72b83a; }
.switch .no:has(:checked) { background: #e27c79; border-color: #d9534f; }

.panel-foot {
  display: flex;
  gap: 5px;
  padding: 10px 15px;
  background: #fcfdfe;
  border-top: 1px solid #eee;
  border-radius: 0 0 5px 5px;
}
.action {
  display: flex;
  flex-direction: column;
  align-items: center;
  height: 52px;
  padding: 2px 8px 0;
}
.action svg { fill: #555; margin-bottom: -1px; }
.push { margin-left: auto; }
</style>
